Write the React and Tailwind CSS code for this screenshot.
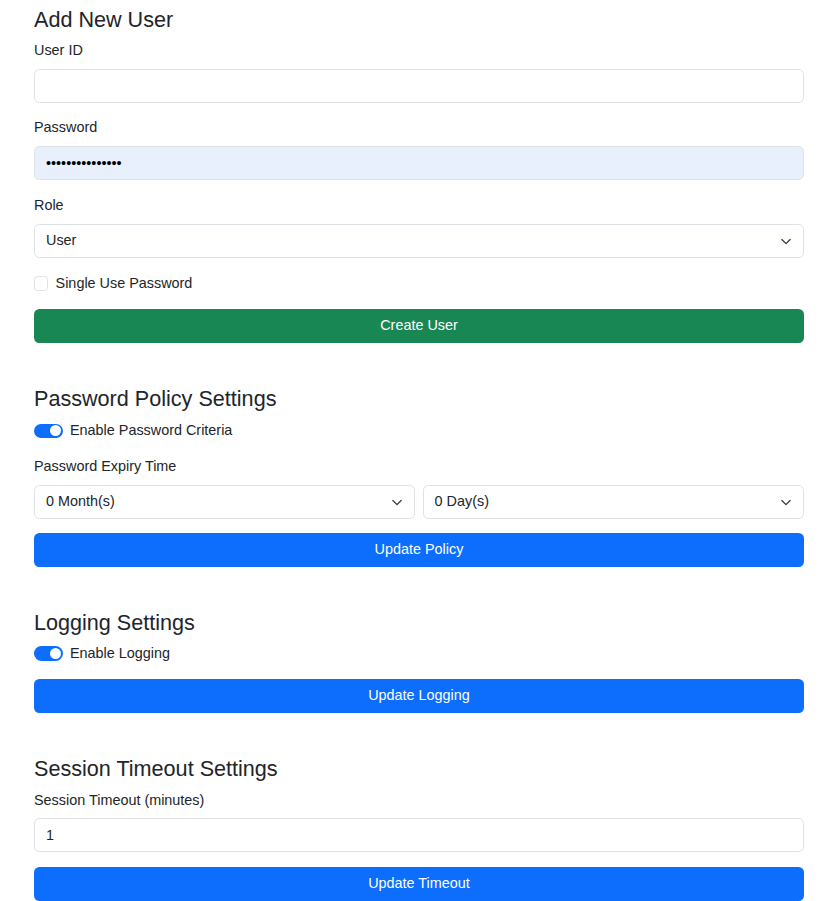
import React from "react";

const font = { fontFamily: '"Liberation Sans", Arial, sans-serif' };

function Chevron() {
  return (
    <svg
      className="pointer-events-none absolute right-[12px] top-1/2 -translate-y-1/2"
      width="12"
      height="9"
      viewBox="0 0 16 12"
      fill="none"
    >
      <path d="m2.5 4 5.5 5.5 5.5-5.5" stroke="#343a40" strokeWidth="1.7" strokeLinecap="round" strokeLinejoin="round" />
    </svg>
  );
}

function Select({ value, options }) {
  return (
    <div className="relative">
      <select
        defaultValue={value}
        className="block h-[34.2px] w-full appearance-none rounded-[5.4px] border border-[#dee2e6] bg-white pl-[11px] pr-[36px] text-[14.4px] leading-[21.6px] text-[#212529] outline-none"
        style={font}
      >
        {options.map((o) => (
          <option key={o}>{o}</option>
        ))}
      </select>
      <Chevron />
    </div>
  );
}

function Label({ children }) {
  return <div className="mb-[7.2px] h-[21.6px] text-[14.4px] leading-[21.6px] text-[#212529]">{children}</div>;
}

function Heading({ children }) {
  return <h4 className="mb-[7.2px] text-[21.6px] font-normal leading-[25.92px] text-[#212529]">{children}</h4>;
}

function Toggle({ label }) {
  return (
    <div className="flex h-[21.6px] items-center">
      <span className="relative block h-[14.4px] w-[28.8px] rounded-full bg-[#0d6efd]">
        <span className="absolute right-[1.8px] top-[1.8px] block h-[10.8px] w-[10.8px] rounded-full bg-white" />
      </span>
      <span className="ml-[7.2px] text-[14.4px] leading-[21.6px] text-[#212529]">{label}</span>
    </div>
  );
}

function Button({ children, color }) {
  return (
    <button
      className={`flex h-[34.2px] w-full items-center justify-center rounded-[5.4px] text-[14.4px] text-white ${color}`}
      style={font}
    >
      {children}
    </button>
  );
}

export default function App() {
  return (
    <div className="min-h-[901px] bg-white" style={font}>
      <div className="ml-[34px] w-[770px] pt-[7px]">
        {/* Add New User */}
        <section>
          <Heading>Add New User</Heading>
          <Label>User ID</Label>
          <input
            className="mb-[14.4px] block h-[34.2px] w-full rounded-[5.4px] border border-[#dee2e6] bg-white px-[11px] text-[14.4px] text-[#212529] outline-none"
            style={font}
            defaultValue=""
          />
          <Label>Password</Label>
          <input
            type="password"
            readOnly
            value="•••••••••••••••"
            className="mb-[14.4px] block h-[34.2px] w-full rounded-[5.4px] border border-[#dee2e6] bg-[#e8f0fe] px-[11px] text-[14.4px] text-black outline-none"
            style={font}
          />
          <Label>Role</Label>
          <div className="mb-[14.4px]">
            <Select value="User" options={["User", "Admin"]} />
          </div>
          <div className="mb-[15.4px] flex h-[21.6px] items-center pt-[1px]">
            <span className="block h-[14.4px] w-[14.4px] rounded-[3.6px] border border-[#dee2e6] bg-white" />
            <span className="ml-[7.2px] text-[14.4px] leading-[21.6px] text-[#212529]">Single Use Password</span>
          </div>
          <Button color="bg-[#198754]">Create User</Button>
        </section>

        {/* Password Policy */}
        <section className="mt-[42.5px]">
          <Heading>Password Policy Settings</Heading>
          <div className="mb-[14.4px] pt-[1px]">
            <Toggle label="Enable Password Criteria" />
          </div>
          <Label>Password Expiry Time</Label>
          <div className="mb-[14px] grid grid-cols-2 gap-[7.2px]">
            <Select value="0 Month(s)" options={["0 Month(s)", "1 Month(s)", "2 Month(s)"]} />
            <Select value="0 Day(s)" options={["0 Day(s)", "1 Day(s)", "2 Day(s)"]} />
          </div>
          <Button color="bg-[#0d6efd]">Update Policy</Button>
        </section>

        {/* Logging */}
        <section className="mt-[42.5px]">
          <Heading>Logging Settings</Heading>
          <div className="mb-[14.4px]">
            <Toggle label="Enable Logging" />
          </div>
          <Button color="bg-[#0d6efd]">Update Logging</Button>
        </section>

        {/* Session Timeout */}
        <section className="mt-[43.5px]">
          <Heading>Session Timeout Settings</Heading>
          <Label>Session Timeout (minutes)</Label>
          <input
            className="mb-[14.4px] block h-[34.2px] w-full rounded-[5.4px] border border-[#dee2e6] bg-white px-[11px] text-[14.4px] text-[#212529] outline-none"
            style={font}
            defaultValue="1"
          />
          <Button color="bg-[#0d6efd]">Update Timeout</Button>
        </section>
      </div>
    </div>
  );
}
